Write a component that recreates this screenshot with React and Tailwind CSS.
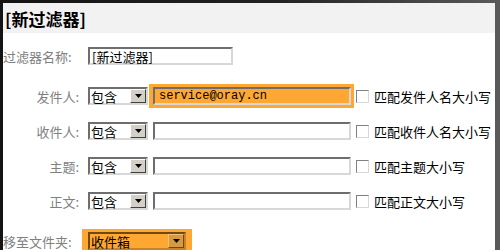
const font = { fontFamily: '"SimSun","Noto Sans CJK SC","Liberation Sans",sans-serif' };

function Arrow() {
  return (
    <div className="w-[16px] h-[14px] bg-[#d4d0c8] border border-t-white border-l-white border-b-[#404040] border-r-[#404040] flex items-center justify-center">
      <svg width="7" height="4" viewBox="0 0 7 4"><path d="M0 0H7L3.5 4Z" fill="#000" /></svg>
    </div>
  );
}

function Select({ w = 60, text = "包含", bg = "bg-white" }) {
  return (
    <div
      className={`h-[18px] ${bg} border-2 border-t-[#6e6e6e] border-l-[#6e6e6e] border-b-[#d8d8d8] border-r-[#d8d8d8] flex items-center justify-between pl-[1px]`}
      style={{ width: w }}
    >
      <span className="text-[13px] leading-none text-black">{text}</span>
      <Arrow />
    </div>
  );
}

function Input({ w = 198, children, bg = "bg-white" }) {
  return (
    <div
      className={`h-[18px] ${bg} border-2 border-t-[#6e6e6e] border-l-[#6e6e6e] border-b-[#d8d8d8] border-r-[#d8d8d8] flex items-center pl-[4px]`}
      style={{ width: w }}
    >
      {children}
    </div>
  );
}

function Check({ label }) {
  return (
    <div className="flex items-center whitespace-nowrap">
      <div className="w-[13px] h-[13px] bg-white border border-t-[#808080] border-l-[#808080] border-b-[#d8d8d8] border-r-[#d8d8d8]" />
      <span className="ml-[5px] text-[13px] leading-none text-black">{label}</span>
    </div>
  );
}

function Row({ label, check, highlight, value }) {
  return (
    <div className="h-[18px] flex items-center whitespace-nowrap">
      <div className="w-[78px] shrink-0 text-right text-[13px] leading-none text-[#808080] pr-[2px]">{label}</div>
      <div className="ml-[7px] shrink-0"><Select /></div>
      {highlight ? (
        <div className="ml-[1px] shrink-0 bg-[#ffa733] pl-[4px] pr-[3px] py-[3px] -my-[3px]">
          <Input w={198} bg="bg-[#ffa733]">
            <span className="text-[12px] leading-none text-black" style={{ fontFamily: '"Liberation Mono",monospace' }}>{value}</span>
          </Input>
        </div>
      ) : (
        <div className="ml-[5px] mr-[3px] shrink-0"><Input w={198} /></div>
      )}
      <div className="ml-[2px] shrink-0"><Check label={check} /></div>
    </div>
  );
}

export default function App() {
  return (
    <div className="w-[500px] h-[250px] overflow-hidden bg-[linear-gradient(90deg,#141414_0%,#222_55%,#5a5a5a_100%)] p-[3px] pb-0 pr-[5px]" style={font}>
      <div className="bg-white h-[247px] overflow-hidden">
        <div className="h-[30px] bg-[#f2f2f2] flex items-center pl-[2px]">
          <span className="text-[17px] font-bold text-black leading-none">[新过滤器]</span>
        </div>
        <div className="mt-[14px] h-[18px] flex items-center">
          <div className="w-[78px] text-[13px] leading-none text-[#808080] whitespace-nowrap">过滤器名称:</div>
          <div className="ml-[7px]">
            <div className="w-[145px] h-[18px] bg-white border-2 border-t-[#6e6e6e] border-l-[#6e6e6e] border-b-[#d8d8d8] border-r-[#d8d8d8] flex items-center pl-[2px]">
              <span className="text-[13px] leading-none text-black">[新过滤器]</span>
            </div>
          </div>
        </div>
        <div className="mt-[22px] flex flex-col gap-[17px]">
          <Row label="发件人:" check="匹配发件人名大小写" highlight value="service@oray.cn" />
          <Row label="收件人:" check="匹配收件人名大小写" />
          <Row label="主题:" check="匹配主题大小写" />
          <Row label="正文:" check="匹配正文大小写" />
        </div>
        <div className="mt-[19px] flex items-start">
          <div className="w-[76px] text-[13px] leading-none text-[#808080] pt-[6px] whitespace-nowrap">移至文件夹:</div>
          <div className="ml-[3px] bg-[#ffa733] pl-[6px] pr-[6px] pt-[3px] pb-[3px]">
            <div className="w-[98px] h-[18px] border-2 border-t-[#6e4a10] border-l-[#6e4a10] border-b-[#c8822a] border-r-[#c8822a] flex items-center justify-between pl-[1px]">
              <span className="text-[13px] leading-none text-black">收件箱</span>
              <div className="w-[16px] h-[14px] bg-[#d89a40] border border-t-[#f0c080] border-l-[#f0c080] border-b-[#6e4a10] border-r-[#6e4a10] flex items-center justify-center">
                <svg width="7" height="4" viewBox="0 0 7 4"><path d="M0 0H7L3.5 4Z" fill="#000" /></svg>
              </div>
            </div>
          </div>
        </div>
      </div>
    </div>
  );
}
